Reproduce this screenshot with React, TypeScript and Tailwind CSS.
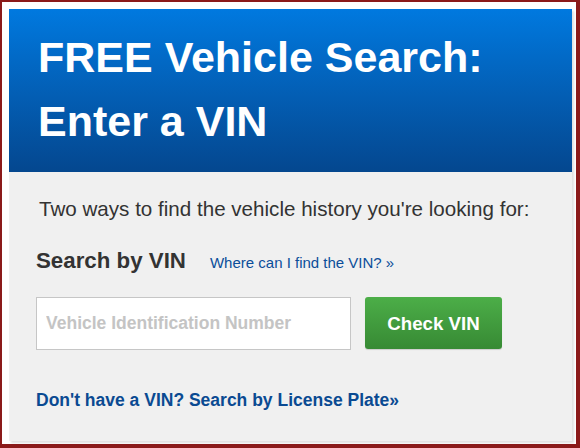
export default function App() {
  return (
    <div
      className="w-[580px] h-[448px] bg-[#8b1a1a] pt-[2px] pl-[2px] pr-[4px] pb-[4px]"
      style={{ fontFamily: '"Liberation Sans", Arial, sans-serif' }}
    >
      <div className="w-full h-full bg-white pt-[7px] pl-[7px] pr-[4px] pb-[3px]">
        <div className="w-full h-full bg-[#f0f0f0] shadow-[2px_2px_2px_rgba(0,0,0,0.12)] flex flex-col">
          {/* Header */}
          <div className="bg-gradient-to-b from-[#0079df] to-[#04478f] pt-[16px] pb-[19px] pl-[29px]">
            <h1 className="text-white font-bold text-[43px] leading-[64px]">
              FREE Vehicle Search:
              <br />
              Enter a VIN
            </h1>
          </div>

          {/* Body */}
          <div className="flex flex-col px-[27px] pt-[25px]">
            <p className="ml-[3px] text-[20.6px] leading-[23px] text-[#333]">
              Two ways to find the vehicle history you're looking for:
            </p>

            <div className="mt-[28px] flex items-baseline">
              <h2 className="text-[22.3px] leading-[26px] font-bold text-[#333]">Search by VIN</h2>
              <a href="#" className="ml-[24px] text-[15px] text-[#0b4e9a]">
                Where can I find the VIN? »
              </a>
            </div>

            <div className="mt-[22px] flex items-start gap-[14px]">
              <input
                type="text"
                placeholder="Vehicle Identification Number"
                className="w-[315px] h-[53px] bg-white border border-[#c6c6c6] pl-[9px] text-[17.5px] font-bold text-[#333] outline-none placeholder:text-[#c4c4c4]"
              />
              <button className="w-[137px] h-[52px] pt-[3px] rounded-[3px] bg-gradient-to-b from-[#4cae48] to-[#378a34] text-white font-bold text-[18.7px] shadow-[0_1px_1px_rgba(0,0,0,0.15)]">
                Check VIN
              </button>
            </div>

            <a href="#" className="mt-[40px] text-[17.5px] leading-[20px] font-bold text-[#0a4a92]">
              Don't have a VIN? Search by License Plate»
            </a>
          </div>
        </div>
      </div>
    </div>
  );
}
